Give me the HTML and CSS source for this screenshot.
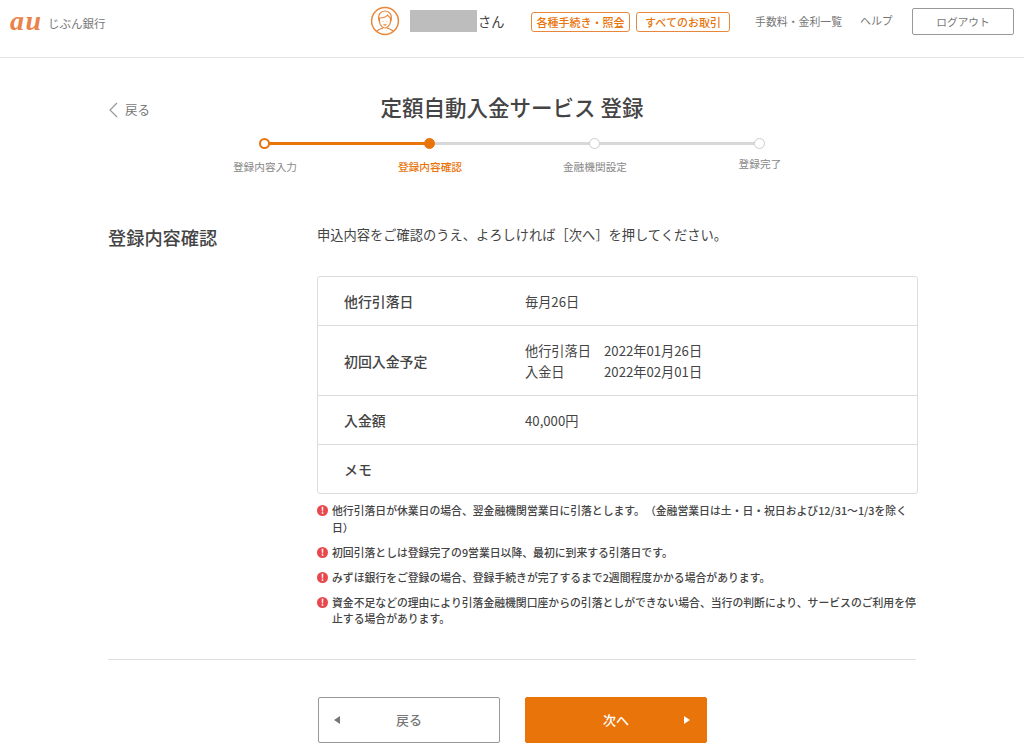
FILE: index.html
```html
<!DOCTYPE html>
<html lang="ja">
<head>
<meta charset="utf-8">
<title>定額自動入金サービス 登録</title>
<link rel="stylesheet" href="styles.css">
</head>
<body>
<header class="hdr">
  <div class="logo"><span class="au">au</span><span class="bank">じぶん銀行</span></div>
  <div class="user">
    <svg class="avatar" width="30" height="30" viewBox="0 0 30 30" fill="none" stroke="#e9883c" stroke-width="1.2">
      <circle cx="15" cy="15" r="13.4" stroke-width="1.500"/>
      <path d="M9 15c-1.500-7 2-10 6-10s7.500 3 6 10"/>
      <path d="M9.500 12c3.500 0 6.500-1 8-3 .8 1.200 2 2.200 3 3v4c0 3-3.500 6-5.500 6s-5.500-3-5.500-6z"/>
      <path d="M7 25c2-2 4-2 6-3M23 25c-2-2-4-2-6-3"/>
      <path d="M13 15v.6M17 15v.6M13.500 18.500c1 .7 2 .7 3 0"/>
    </svg>
    <span class="mask"></span><span class="san">さん</span>
  </div>
  <nav class="nav">
    <a class="tag tag-a">各種手続き・照会</a>
    <a class="tag tag-b">すべてのお取引</a>
    <a class="lnk lnk-a">手数料・金利一覧</a>
    <a class="lnk lnk-b">ヘルプ</a>
    <a class="logout">ログアウト</a>
  </nav>
</header>
<main class="main">
  <div class="titlebar">
    <a class="back"><svg width="10" height="16" viewBox="0 0 10 16" fill="none" stroke="#999" stroke-width="1.2"><path d="M9 1L2 8l7 7"/></svg>戻る</a>
    <h1 class="title">定額自動入金サービス 登録</h1>
  </div>
  <ol class="steps">
    <li class="step done"><i class="dot"></i><span>登録内容入力</span></li>
    <li class="step cur"><i class="dot"></i><span>登録内容確認</span></li>
    <li class="step"><i class="dot"></i><span>金融機関設定</span></li>
    <li class="step last"><i class="dot"></i><span>登録完了</span></li>
  </ol>
  <section class="body">
    <h2 class="sec">登録内容確認</h2>
    <div class="content">
      <p class="lead">申込内容をご確認のうえ、よろしければ［次へ］を押してください。</p>
      <div class="tbl">
        <div class="row"><div class="th">他行引落日</div><div class="td">毎月26日</div></div>
        <div class="row tall"><div class="th">初回入金予定</div><div class="td">
          <div class="kv"><span>他行引落日</span><span>2022年01月26日</span></div>
          <div class="kv"><span>入金日</span><span>2022年02月01日</span></div>
        </div></div>
        <div class="row"><div class="th">入金額</div><div class="td">40,000円</div></div>
        <div class="row"><div class="th">メモ</div><div class="td"></div></div>
      </div>
      <ul class="notes">
        <li>他行引落日が休業日の場合、翌金融機関営業日に引落とします。（金融営業日は土・日・祝日および12/31～1/3を除く日）</li>
        <li>初回引落としは登録完了の9営業日以降、最初に到来する引落日です。</li>
        <li>みずほ銀行をご登録の場合、登録手続きが完了するまで2週間程度かかる場合があります。</li>
        <li>資金不足などの理由により引落金融機関口座からの引落としができない場合、当行の判断により、サービスのご利用を停止する場合があります。</li>
      </ul>
    </div>
  </section>
  <hr class="rule">
  <div class="btns">
    <a class="btn prev">戻る</a>
    <a class="btn next">次へ</a>
  </div>
</main>
</body>
</html>
```
FILE: styles.css
```css
* { box-sizing: border-box; }
html, body { margin: 0; padding: 0; height: 748px; overflow: hidden; background: #fff; }
body { font-family: "Noto Sans CJK JP", "Noto Sans", sans-serif; color: #444; text-spacing-trim: space-all; }
a { display: block; }
.hdr { height: 58px; border-bottom: 1px solid #e3e3e3; display: flex; align-items: flex-start; position: relative; }
.logo { display: flex; align-items: center; margin: 8px 0 0 10px; width: 360px; height: 28px; }
.au { font-family: "Liberation Serif", serif; font-style: italic; font-weight: bold; font-size: 28px; line-height: 24px; color: #e9834a; letter-spacing: 1.500px; width: 38px; margin-top: -3px; }
.bank { font-size: 11.500px; color: #777; margin-top: 1px; }
.user { display: flex; align-items: center; margin-top: 6px; height: 30px; }
.avatar { display: block; }
.mask { width: 67px; height: 22px; background: #bdbdbd; margin-left: 10px; }
.san { font-size: 13.200px; color: #444; width: 54px; padding-left: 1px; }
.nav { display: flex; align-items: flex-start; margin-top: 8px; }
.tag { height: 20px; margin-top: 4px; border: 1px solid #e9883c; border-radius: 3px; color: #e9740a; font-size: 11px; font-weight: 500; line-height: 18px; text-align: center; }
.tag-a { width: 99px; }
.tag-b { width: 94px; margin-left: 6px; }
.lnk { font-size: 10.900px; color: #777; line-height: 19px; height: 21px; margin-top: 4px; }
.lnk-a { margin-left: 25px; width: 105px; }
.lnk-b { width: 52px; margin-top: 3px; }
.logout { width: 102px; height: 27px; border: 1px solid #999; border-radius: 2px; font-size: 10.700px; color: #777; text-align: center; line-height: 25px; }
.main { width: 810px; margin-left: 108px; }
.titlebar { position: relative; height: 34px; margin-top: 31px; width: 808px; text-align: center; }
.back { position: absolute; left: 0; top: 8px; display: flex; align-items: center; gap: 7px; font-size: 12.500px; color: #777; line-height: 26px; }
.title { margin: 0; font-size: 21.500px; font-weight: 500; line-height: 36px; color: #444; }
.steps { list-style: none; display: flex; margin: 15px 0 0 92px; padding: 0; width: 660px; }
.step { width: 165px; position: relative; height: 40px; display: flex; flex-direction: column; align-items: flex-start; }
.dot { position: absolute; left: 59px; top: 0; width: 11px; height: 11px; border-radius: 50%; border: 1.500px solid #ccc; background: #fff; z-index: 1; }
.step::after { content: ""; position: absolute; left: 64px; top: 4px; width: 165px; height: 2.500px; background: #d8d8d8; }
.step.last::after { display: none; }
.step span { position: absolute; left: 0; width: 130px; text-align: center; top: 21px; font-size: 10.700px; line-height: 16px; color: #888; }
.done .dot { border: 2px solid #e9740a; }
.done::after { background: #e9740a; }
.cur .dot { background: #e9740a; border-color: #e9740a; }
.cur span { color: #e9740a; font-weight: 500; }
.step.last span { top: 18px; }
.body { display: flex; margin-top: 45px; }
.sec { margin: 0; width: 209px; font-size: 18.200px; font-weight: 500; line-height: 28px; color: #444; }
.content { width: 601px; }
.lead { margin: 0; font-size: 13.250px; line-height: 24px; color: #444; height: 37px; }
.tbl { margin-top: 16px; border: 1px solid #dcdcdc; border-radius: 3px; width: 601px; }
.row { display: flex; align-items: center; height: 49px; border-top: 1px solid #dcdcdc; font-size: 13.200px; }
.row:first-child { border-top: 0; height: 48px; }
.row.tall { height: 70px; }
.th { width: 207px; padding-left: 26px; font-weight: 500; font-size: 13.900px; color: #444; }
.td { color: #444; }
.kv { display: flex; line-height: 21px; }
.kv span:first-child { width: 79px; }
.notes { list-style: none; margin: 8px 0 0; padding: 0; width: 601px; }
.notes li { position: relative; padding-left: 15px; font-size: 10.830px; line-height: 16.500px; margin-bottom: 8.500px; color: #444; font-weight: 500; }
.notes li::before { content: "!"; position: absolute; left: 0; top: 3px; width: 11px; height: 11px; border-radius: 50%; background: #e8474c; color: #fff; font-size: 9.500px; line-height: 11px; text-align: center; font-weight: bold; }
.rule { border: 0; border-top: 1px solid #dedede; margin: 24px 0 0; width: 808px; }
.btns { display: flex; gap: 25px; margin: 37px 0 0 210px; }
.btn { width: 182px; height: 46px; border-radius: 2px; line-height: 44px; text-align: center; font-size: 13px; font-weight: 500; position: relative; }
.btn::after { content: ""; position: absolute; top: 50%; margin-top: -4px; border: 4px solid transparent; }
.prev { border: 1px solid #999; color: #777; }
.prev::after { left: 15px; border-left-width: 0; border-right: 6px solid #777; }
.next { background: #e9740a; color: #fff; border: 1px solid #e9740a; }
.next::after { right: 16px; border-right-width: 0; border-left: 6px solid #fff; }
```
